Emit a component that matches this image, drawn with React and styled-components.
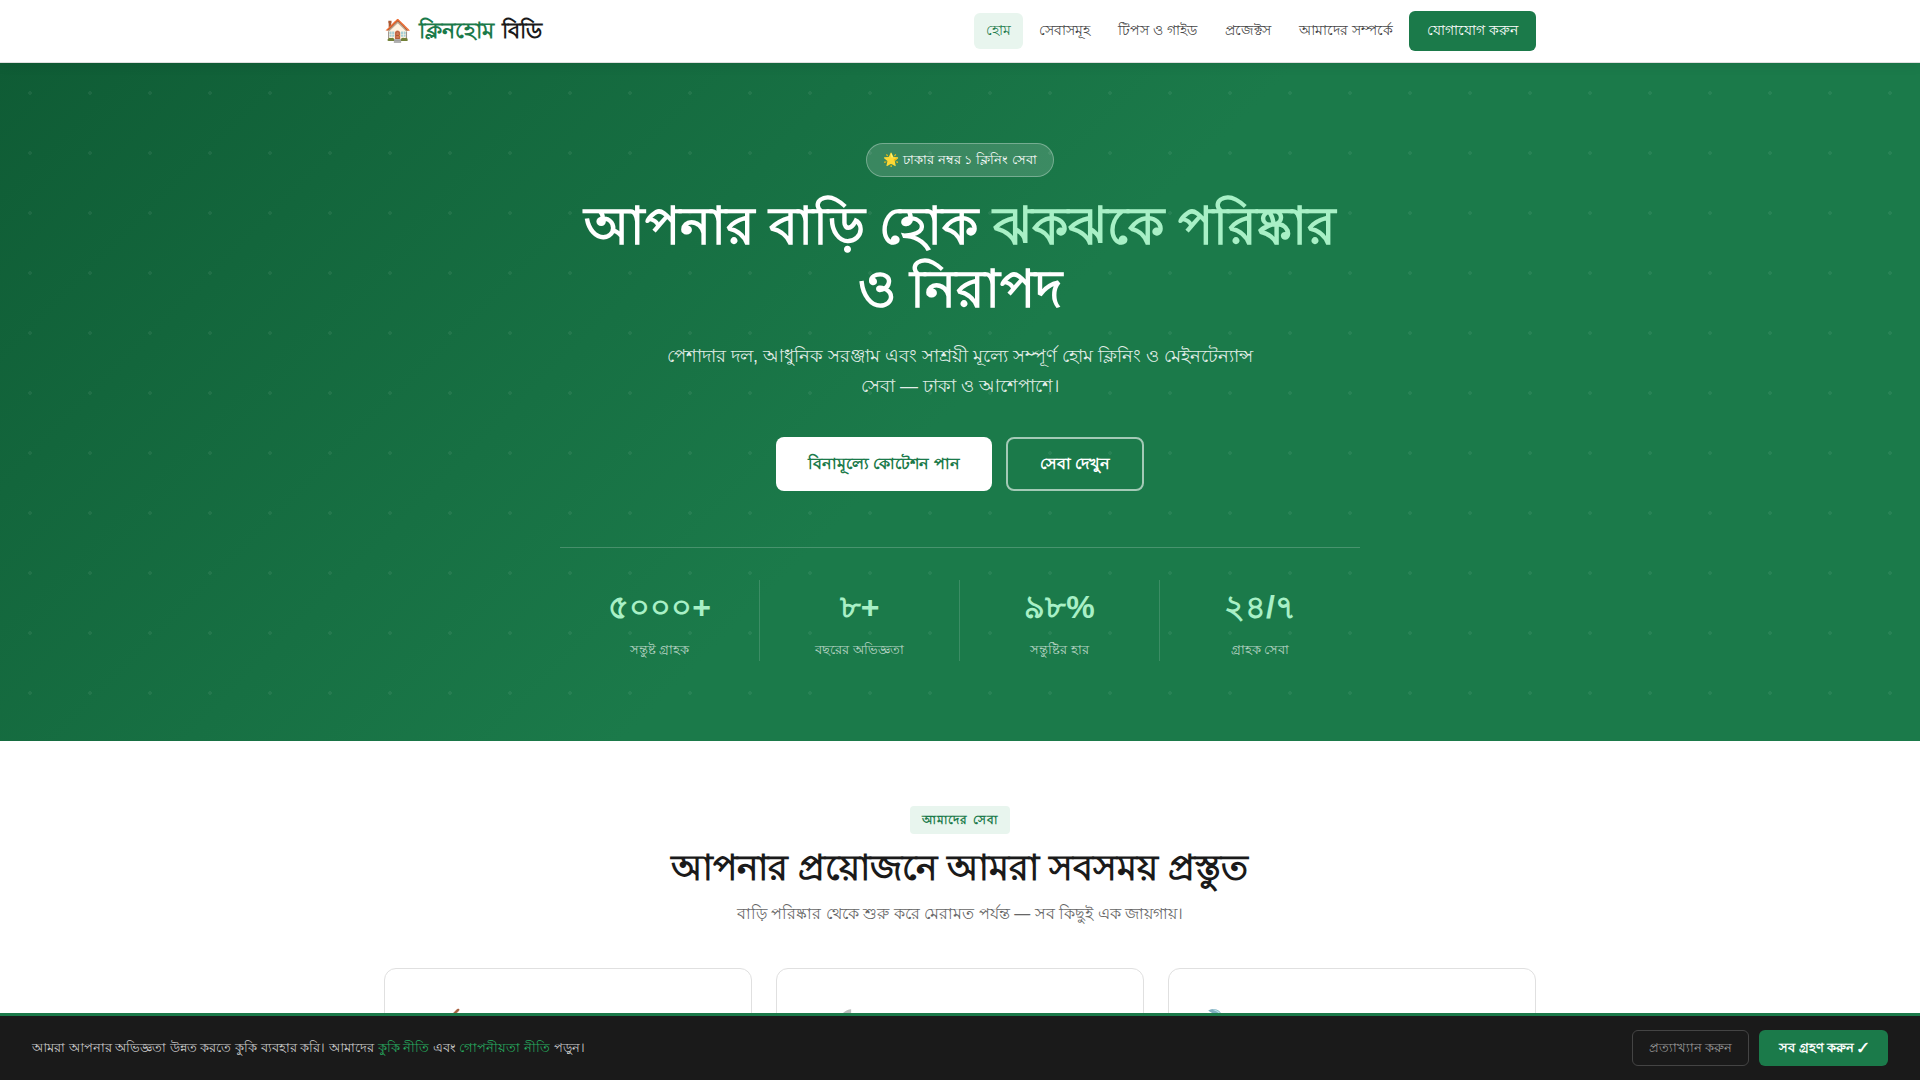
import React from "react";
import styled, { createGlobalStyle } from "styled-components";

const GlobalStyle = createGlobalStyle`
  * {
    box-sizing: border-box;
    margin: 0;
    padding: 0;
  }
  body {
    font-family: "Liberation Sans", sans-serif;
    font-size: 16px;
    line-height: 1.7;
    color: #1a1a1a;
    background: #fff;
  }
  a {
    text-decoration: none;
  }
  button {
    font-family: inherit;
    cursor: pointer;
  }
`;

const navLinks = ["হোম", "সেবাসমূহ", "টিপস ও গাইড", "প্রজেক্টস", "আমাদের সম্পর্কে"];

const stats = [
  { number: "৫০০০+", label: "সন্তুষ্ট গ্রাহক" },
  { number: "৮+", label: "বছরের অভিজ্ঞতা" },
  { number: "৯৮%", label: "সন্তুষ্টির হার" },
  { number: "২৪/৭", label: "গ্রাহক সেবা" },
];

const services = [
  { id: "cleaning", icon: "🧹" },
  { id: "bathroom", icon: "🚿" },
  { id: "maintenance", icon: "🔧" },
];

const App = () => {
  return (
    <div lang="bn">
      <GlobalStyle />
      <Header>
        <Nav>
          <Logo href="#home">
            🏠 <span>ক্লিনহোম</span> বিডি
          </Logo>
          <NavList>
            {navLinks.map((text, i) => (
              <li key={text}>
                <NavLink href="#" $active={i === 0}>{text}</NavLink>
              </li>
            ))}
            <li>
              <ContactLink href="#contact">যোগাযোগ করুন</ContactLink>
            </li>
          </NavList>
        </Nav>
      </Header>

      <Hero>
        <HeroInner>
          <Badge>🌟 ঢাকার নম্বর ১ ক্লিনিং সেবা</Badge>
          <HeroTitle>
            আপনার বাড়ি হোক <span>ঝকঝকে পরিষ্কার</span> ও নিরাপদ
          </HeroTitle>
          <HeroText>
            পেশাদার দল, আধুনিক সরঞ্জাম এবং সাশ্রয়ী মূল্যে সম্পূর্ণ হোম ক্লিনিং ও মেইনটেন্যান্স সেবা — ঢাকা ও আশেপাশে।
          </HeroText>
          <HeroButtons>
            <HeroLink href="#contact" $solid>বিনামূল্যে কোটেশন পান</HeroLink>
            <HeroLink href="#services">সেবা দেখুন</HeroLink>
          </HeroButtons>
          <Stats>
            {stats.map((stat) => (
              <Stat key={stat.label}>
                <StatNumber>{stat.number}</StatNumber>
                <StatLabel>{stat.label}</StatLabel>
              </Stat>
            ))}
          </Stats>
        </HeroInner>
      </Hero>

      <Section id="services">
        <SectionHead>
          <SectionTag>আমাদের সেবা</SectionTag>
          <SectionTitle>আপনার প্রয়োজনে আমরা সবসময় প্রস্তুত</SectionTitle>
          <SectionText>বাড়ি পরিষ্কার থেকে শুরু করে মেরামত পর্যন্ত — সব কিছুই এক জায়গায়।</SectionText>
        </SectionHead>
        <Cards>
          {services.map((service) => (
            <Card key={service.id}>
              <CardIcon>{service.icon}</CardIcon>
            </Card>
          ))}
        </Cards>
      </Section>

      <CookieBar>
        <CookieText>
          আমরা আপনার অভিজ্ঞতা উন্নত করতে কুকি ব্যবহার করি। আমাদের <a href="#cookies">কুকি নীতি</a> এবং <a href="#privacy">গোপনীয়তা নীতি</a> পড়ুন।
        </CookieText>
        <CookieButtons>
          <DeclineButton type="button">প্রত্যাখ্যান করুন</DeclineButton>
          <AcceptButton type="button">সব গ্রহণ করুন ✓</AcceptButton>
        </CookieButtons>
      </CookieBar>
    </div>
  );
};

const Header = styled.header`
  position: sticky;
  top: 0;
  z-index: 10;
  background: #fff;
  border-bottom: 1px solid #e0e0e0;
  box-shadow: 0 2px 12px rgba(0, 0, 0, 0.08);
`;

const Nav = styled.nav`
  display: flex;
  align-items: center;
  justify-content: space-between;
  max-width: 1200px;
  min-height: 62px;
  margin: 0 auto;
  padding: 0 24px;
`;

const Logo = styled.a`
  display: flex;
  gap: 8px;
  font-size: 22px;
  font-weight: 700;
  color: #1a1a1a;

  span {
    color: #1b7a4a;
  }
`;

const NavList = styled.ul`
  display: flex;
  align-items: center;
  gap: 4px;
  list-style: none;
`;

const NavLink = styled.a`
  display: block;
  padding: 6px 12px;
  border-radius: 6px;
  font-size: 14px;
  color: ${(props) => (props.$active ? "#1b7a4a" : "#444")};
  background: ${(props) => (props.$active ? "#e8f5ee" : "transparent")};
`;

const ContactLink = styled.a`
  display: block;
  padding: 8px 18px;
  border-radius: 6px;
  font-size: 14px;
  color: #fff;
  background: #1b7a4a;
`;

const Hero = styled.section`
  padding: 80px 24px;
  text-align: center;
  color: #fff;
  background-image: radial-gradient(circle, rgba(255, 255, 255, 0.06) 2px, transparent 2px),
    linear-gradient(135deg, #0f5c35 0%, #1b7a4a 50%);
  background-size: 60px 60px, 100% 100%;
`;

const HeroInner = styled.div`
  max-width: 800px;
  margin: 0 auto;
`;

const Badge = styled.div`
  display: inline-block;
  margin-bottom: 18px;
  padding: 5px 16px;
  border: 1px solid rgba(255, 255, 255, 0.3);
  border-radius: 20px;
  font-size: 13px;
  background: rgba(255, 255, 255, 0.15);
`;

const HeroTitle = styled.h1`
  margin-bottom: 20px;
  font-size: 52px;
  line-height: 63px;
  font-weight: 800;

  span {
    color: #a8f0c6;
  }
`;

const HeroText = styled.p`
  max-width: 600px;
  margin: 0 auto 36px;
  font-size: 18px;
  line-height: 30px;
  color: rgba(255, 255, 255, 0.88);
`;

const HeroButtons = styled.div`
  display: flex;
  flex-wrap: wrap;
  justify-content: center;
  gap: 14px;
  margin-bottom: 56px;
`;

const HeroLink = styled.a`
  padding: ${(props) => (props.$solid ? "13px 32px" : "11px 32px")};
  border: ${(props) => (props.$solid ? "none" : "2px solid rgba(255, 255, 255, 0.6)")};
  border-radius: 8px;
  font-size: 16px;
  line-height: 28px;
  font-weight: 700;
  color: ${(props) => (props.$solid ? "#1b7a4a" : "#fff")};
  background: ${(props) => (props.$solid ? "#fff" : "transparent")};
`;

const Stats = styled.div`
  display: grid;
  grid-template-columns: repeat(4, 1fr);
  padding-top: 32px;
  border-top: 1px solid rgba(255, 255, 255, 0.2);
`;

const Stat = styled.div`
  border-right: 1px solid rgba(255, 255, 255, 0.15);

  &:last-child {
    border-right: none;
  }
`;

const StatNumber = styled.div`
  font-size: 32px;
  line-height: 54px;
  font-weight: 800;
  color: #a8f0c6;
`;

const StatLabel = styled.div`
  margin-top: 4px;
  font-size: 13px;
  line-height: 23px;
  color: rgba(255, 255, 255, 0.7);
`;

const Section = styled.section`
  max-width: 1200px;
  margin: 0 auto;
  padding: 64px 24px;
`;

const SectionHead = styled.div`
  margin-bottom: 40px;
  text-align: center;
`;

const SectionTag = styled.div`
  display: inline-block;
  margin-bottom: 12px;
  padding: 4px 12px;
  border-radius: 4px;
  font-size: 12px;
  font-weight: 700;
  letter-spacing: 1px;
  color: #1b7a4a;
  background: #e8f5ee;
`;

const SectionTitle = styled.h2`
  margin-bottom: 10px;
  font-size: 36px;
  line-height: 44px;
  font-weight: 800;
`;

const SectionText = styled.p`
  font-size: 16px;
  color: #666;
`;

const Cards = styled.div`
  display: grid;
  grid-template-columns: repeat(3, 1fr);
  gap: 24px;
`;

const Card = styled.article`
  padding: 32px;
  border: 1px solid #e0e0e0;
  border-radius: 12px;
`;

const CardIcon = styled.div`
  font-size: 36px;
  line-height: 56px;
`;

const CookieBar = styled.div`
  position: fixed;
  left: 0;
  right: 0;
  bottom: 0;
  z-index: 20;
  display: flex;
  align-items: center;
  justify-content: space-between;
  gap: 16px;
  padding: 14px 32px;
  border-top: 3px solid #1b7a4a;
  background: #1a1a1a;
`;

const CookieText = styled.p`
  font-size: 13px;
  color: #ccc;

  a {
    color: #27ae60;
  }
`;

const CookieButtons = styled.div`
  display: flex;
  gap: 10px;
`;

const DeclineButton = styled.button`
  height: 36px;
  padding: 0 16px;
  border: 1px solid #444;
  border-radius: 6px;
  font-size: 13px;
  color: #999;
  background: transparent;
`;

const AcceptButton = styled.button`
  height: 36px;
  padding: 0 20px;
  border: none;
  border-radius: 6px;
  font-size: 13px;
  font-weight: 700;
  color: #fff;
  background: #1b7a4a;
`;

export default App;
